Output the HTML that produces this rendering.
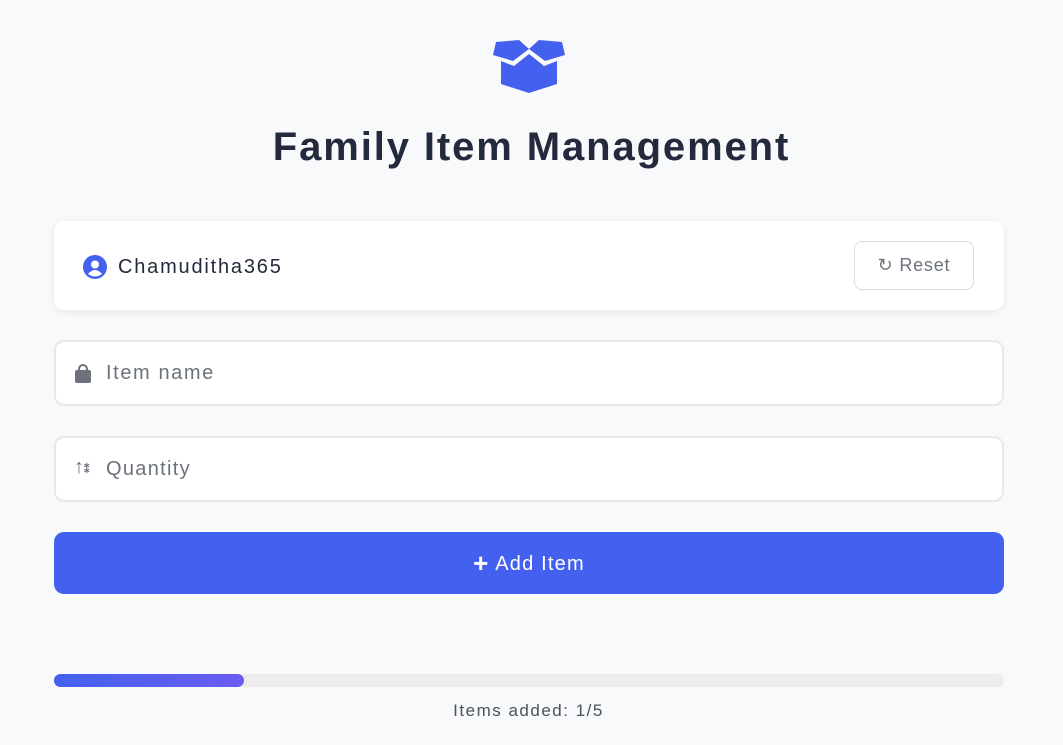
<!DOCTYPE html>
<html><head><style>
body{margin:0;width:1063px;height:745px;background:#f8f9fa;font-family:"Liberation Sans",sans-serif;position:relative;overflow:hidden}
.abs{position:absolute}
h1{position:absolute;top:125px;left:0;width:1063px;text-align:center;margin:0;font-size:40px;font-weight:bold;color:#242a3d;letter-spacing:1.9px}
.card{left:54px;top:221px;width:950px;height:89px;background:#fff;border-radius:10px;box-shadow:0 2px 8px rgba(0,0,0,0.07)}
.inp{left:54px;width:946px;height:62px;background:#fff;border:2px solid #e6e8eb;border-radius:10px}
.ph{position:absolute;left:50px;top:20px;font-size:20px;color:#6c727c}
</style></head><body>
<svg class="abs" style="left:492px;top:39px" width="74" height="54" viewBox="0 0 74 54">
<path d="M4 3 L27 1 L37 10 L47 1 L70 3 L73 16 L53 22 L37 10 L21 22 L1 16Z" fill="#4361ee"/>
<path d="M9 22 L22 27 L37 15 L52 27 L65 22 L65 45 L37 54 L9 45Z" fill="#4361ee"/>
</svg>
<h1>Family Item Management</h1>
<div class="abs card">
<svg class="abs" style="left:29px;top:34px" width="24" height="24" viewBox="0 0 24 24"><circle cx="12" cy="12" r="12" fill="#4361ee"/><circle cx="12" cy="9.5" r="4" fill="#fff"/><path d="M5 19 Q12 11 19 19 Q12 24 5 19Z" fill="#fff"/></svg>
<div class="abs" style="left:64px;top:35px;font-size:20px;color:#242a3d;letter-spacing:1.8px">Chamuditha365</div>
<div class="abs" style="left:800px;top:20px;width:118px;height:47px;border:1px solid #d9dce0;border-radius:8px;font-size:18px;color:#6c727c;line-height:47px;text-align:center;letter-spacing:0.8px">&#8635; Reset</div>
</div>
<div class="abs inp" style="top:340px">
<svg class="abs" style="left:18px;top:22px" width="18" height="19" viewBox="0 0 18 19"><path d="M5 7V5a4 4 0 0 1 8 0v2" stroke="#6c727c" stroke-width="2" fill="none"/><rect x="1" y="6" width="16" height="13" rx="2" fill="#6c727c"/></svg>
<div class="ph" style="letter-spacing:1.6px">Item name</div></div>
<div class="abs inp" style="top:436px">
<div class="abs" style="left:18px;top:18px;font-size:20px;color:#6c727c;font-weight:bold">↑<span style="font-size:11px">⁑</span></div>
<div class="ph" style="letter-spacing:1.3px">Quantity</div></div>
<div class="abs" style="left:54px;top:532px;width:950px;height:62px;background:#4361ee;border-radius:10px;color:#fff;font-size:20px;line-height:62px;text-align:center;letter-spacing:1.2px"><b style="font-size:26px;vertical-align:-2px">+</b> Add Item</div>
<div class="abs" style="left:54px;top:674px;width:950px;height:13px;background:#ececec;border-radius:7px"><div style="width:190px;height:13px;border-radius:7px;background:linear-gradient(90deg,#4361ee,#6a5cf0)"></div></div>
<div class="abs" style="left:0;top:701px;width:1057px;text-align:center;font-size:17px;color:#4b515b;letter-spacing:1.5px">Items added: 1/5</div>
</body></html>
